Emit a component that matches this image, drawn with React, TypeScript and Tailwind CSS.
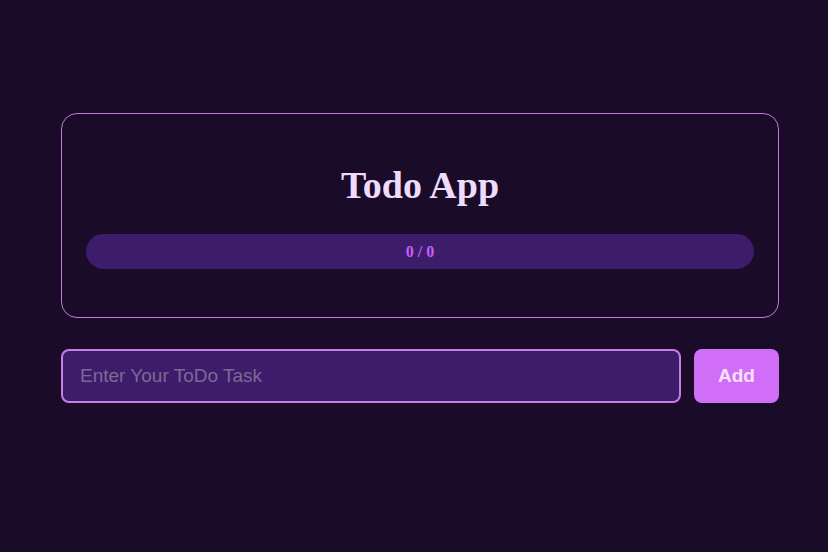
import { useState } from "react";

function Progress({ done, total }: { done: number; total: number }) {
  return (
    <div className="w-full h-[35px] rounded-full bg-[#3e1c6c] flex items-center justify-center">
      <span className="font-['Liberation_Serif',serif] font-bold text-base text-[#c75ff3]">
        {done} / {total}
      </span>
    </div>
  );
}

export default function App() {
  const [task, setTask] = useState("");
  const [todos, setTodos] = useState<string[]>([]);

  return (
    <div className="min-h-[552px] w-full bg-[#1a0b28] pt-[113px]">
      <div className="ml-[61px] w-[718px]">
        <div className="border border-[#c07cd9] rounded-2xl px-6 pt-[52px] pb-12">
          <h1 className="text-center font-['Liberation_Serif',serif] font-bold text-[38px] leading-none text-[#efdcfb] mb-[30px]">
            Todo App
          </h1>
          <Progress done={0} total={todos.length} />
        </div>
        <div className="flex gap-[13px] mt-[31px]">
          <input
            autoFocus
            value={task}
            onChange={(e) => setTask(e.target.value)}
            placeholder="Enter Your ToDo Task"
            className="flex-1 h-[54px] rounded-lg border-2 border-[#c57ee6] bg-[#3e1c6c] px-[17px] font-['Liberation_Sans',sans-serif] text-[19px] text-white placeholder:text-[#7c6a93] caret-white outline-none"
          />
          <button
            onClick={() => {
              if (task.trim()) setTodos([...todos, task]);
              setTask("");
            }}
            className="w-[85px] h-[54px] rounded-lg bg-[#d06ef8] font-['Liberation_Sans',sans-serif] font-bold text-[19px] text-[#fbe0ff]"
          >
            Add
          </button>
        </div>
      </div>
    </div>
  );
}
